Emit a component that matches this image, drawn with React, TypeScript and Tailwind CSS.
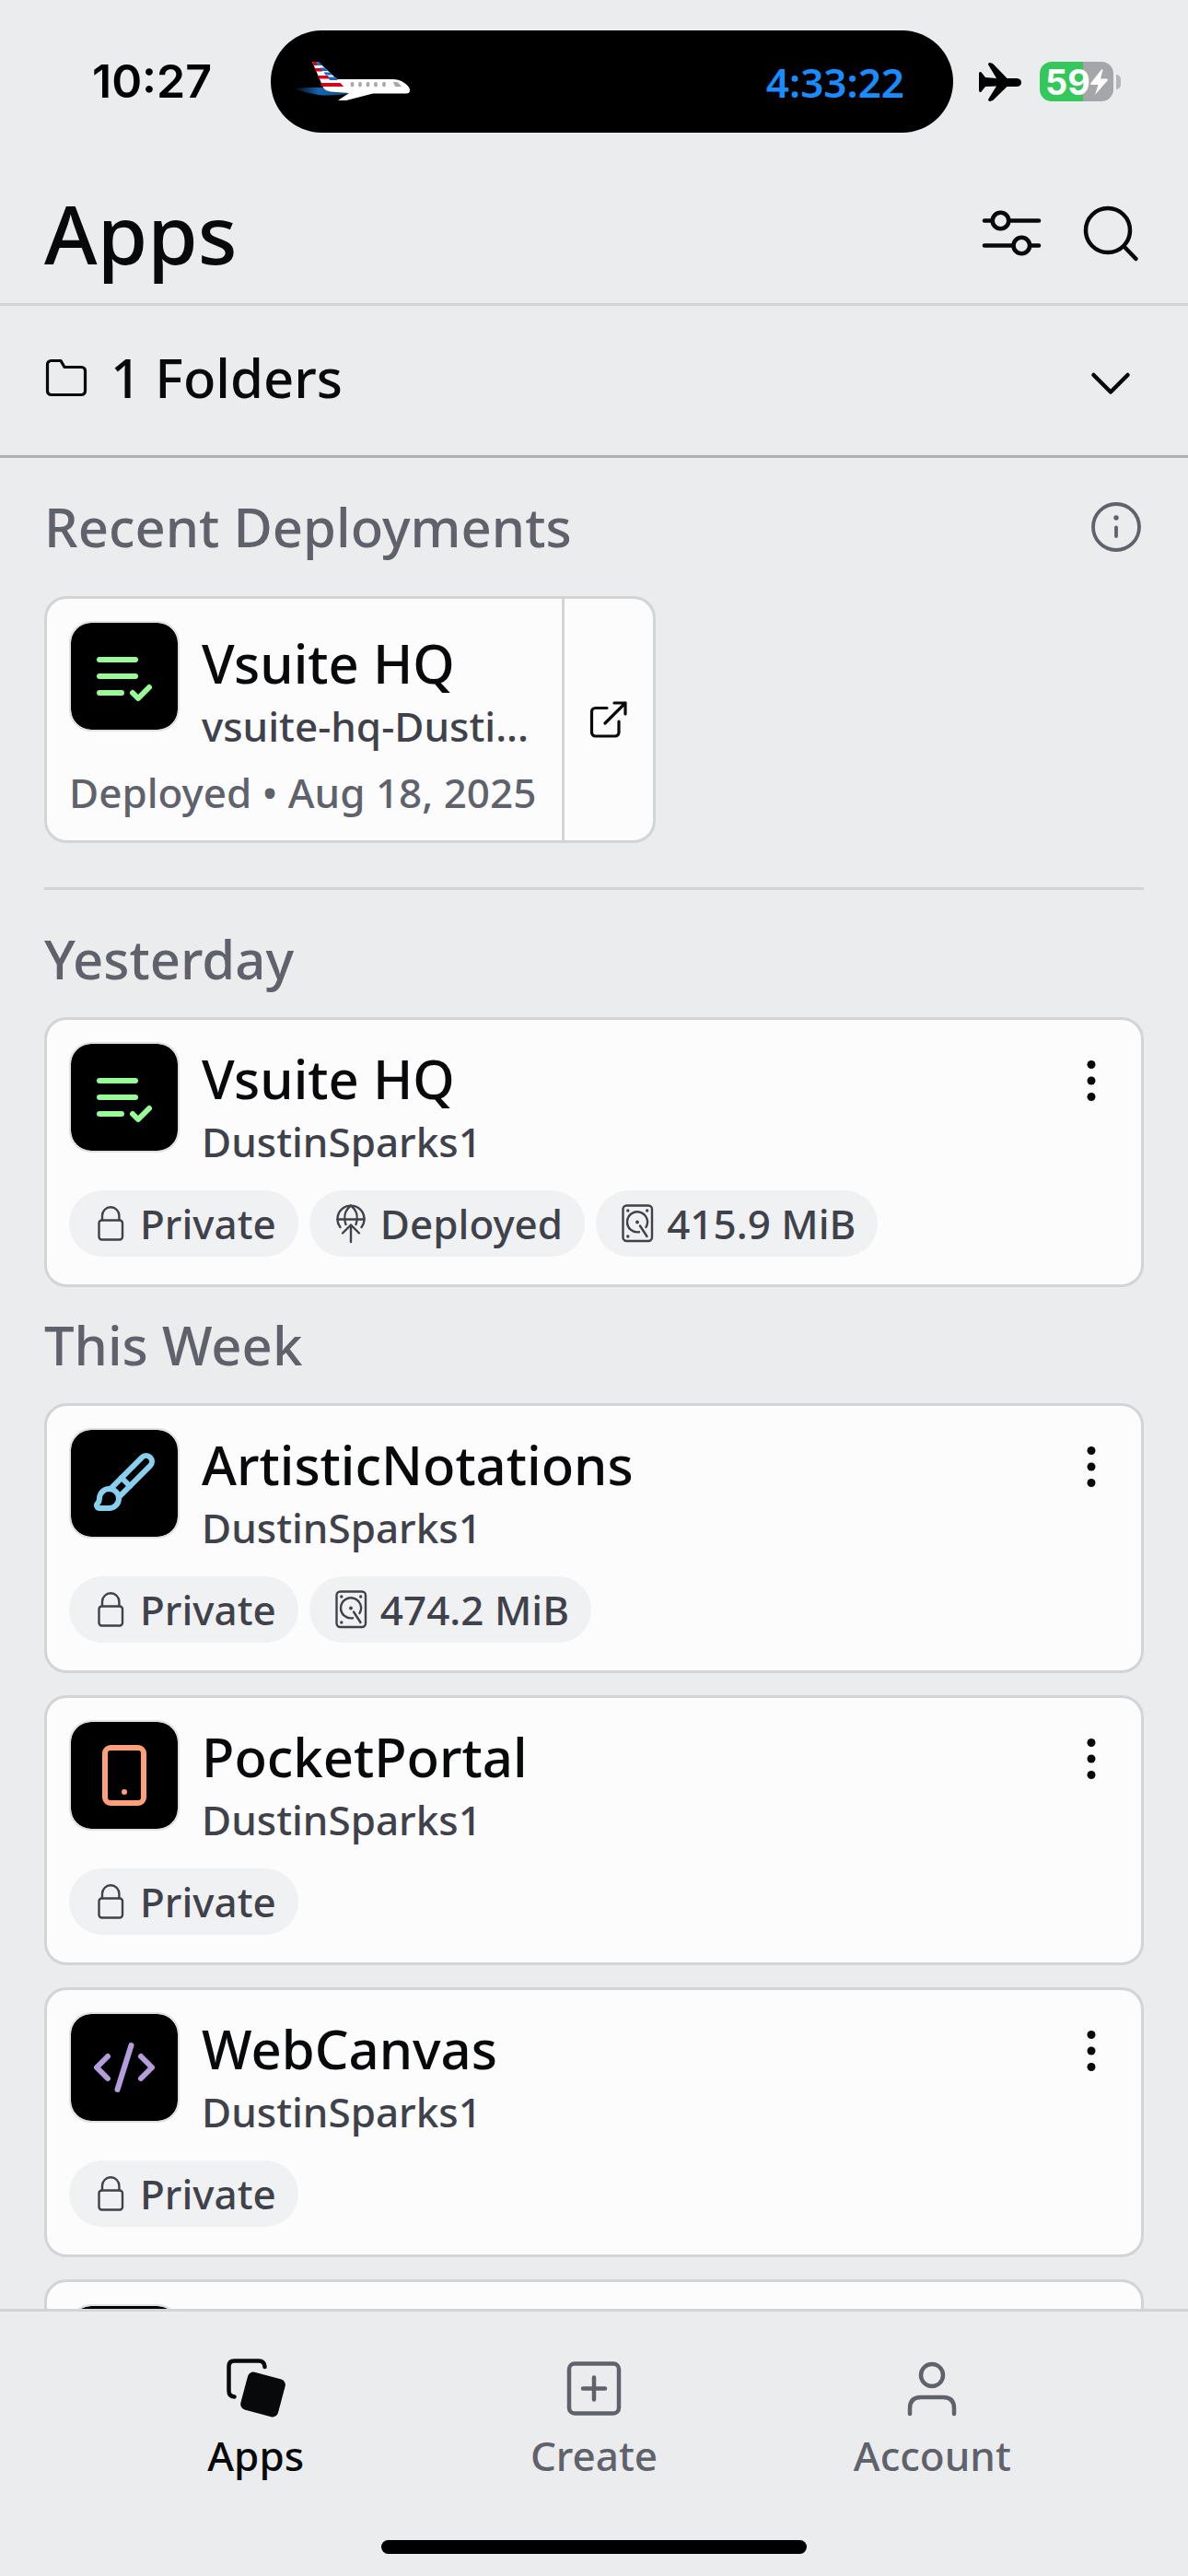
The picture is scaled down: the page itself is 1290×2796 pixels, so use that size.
import React from "react";
import { Brush, CodeXml, Smartphone } from "lucide-react";

type Tag = "private" | "deployed" | "storage";
type AppItem = { name: string; owner: string; icon: React.ReactNode; tags: { kind: Tag; label: string }[] };

/* ---------- icons ---------- */

function Stroke({ box, width, className, children }: { box: string; width: number; className: string; children: React.ReactNode }) {
  return (
    <svg viewBox={box} className={className} fill="none" stroke="currentColor" strokeWidth={width} strokeLinecap="round" strokeLinejoin="round" aria-hidden="true">
      {children}
    </svg>
  );
}

function ListCheckIcon() {
  return (
    <Stroke box="0 0 24 24" width={2} className="size-18 text-[#98fb98]">
      <path d="M16 6H3M16 12H3M11 18H3" />
      <path d="m15 18 2 2 4-4" />
    </Stroke>
  );
}

function FiltersIcon() {
  return (
    <Stroke box="0 0 72 72" width={4.6} className="size-18">
      <path d="M7 22.500h8.500M33.500 22.500H66M7 49.500h31M56.500 49.500H66" />
      <circle cx="24.500" cy="22.500" r="8.800" />
      <circle cx="47.300" cy="49.500" r="8.800" />
    </Stroke>
  );
}

function SearchIcon() {
  return (
    <Stroke box="0 0 72 72" width={4.5} className="size-18">
      <circle cx="33" cy="33" r="24" />
      <path d="M50.500 50.500 63.500 64" />
    </Stroke>
  );
}

function FolderIcon() {
  return (
    <Stroke box="0 0 48 48" width={3.2} className="size-12">
      <path d="M7.500 5.500H18l4 7h18.500a4 4 0 0 1 4 4v22a4 4 0 0 1-4 4h-33a4 4 0 0 1-4-4v-29a4 4 0 0 1 4-4Z" />
    </Stroke>
  );
}

function ChevronIcon() {
  return (
    <Stroke box="0 0 72 72" width={4.5} className="size-18">
      <path d="M17.500 33 36 51.500 54.500 33" />
    </Stroke>
  );
}

function InfoIcon() {
  return (
    <Stroke box="0 0 60 60" width={3.8} className="size-15">
      <circle cx="30" cy="30" r="25" />
      <path d="M30 30.500v9.500" />
      <circle cx="30" cy="20" r="2.700" fill="currentColor" stroke="none" />
    </Stroke>
  );
}

function ExternalIcon() {
  return (
    <Stroke box="0 0 48 48" width={3.2} className="size-12">
      <path d="M22 11.500H9.500a4 4 0 0 0-4 4V38a4 4 0 0 0 4 4H31a4 4 0 0 0 4-4V26" />
      <path d="M30 6h12v12M42 6 20 28" />
    </Stroke>
  );
}

function DotsIcon() {
  return (
    <svg viewBox="0 0 48 48" className="size-12" fill="currentColor" aria-hidden="true">
      <circle cx="24" cy="6.500" r="4.500" />
      <circle cx="24" cy="24" r="4.500" />
      <circle cx="24" cy="41.500" r="4.500" />
    </svg>
  );
}

function TagIcon({ kind }: { kind: Tag }) {
  return (
    <Stroke box="0 0 36 48" width={2.4} className="h-12 w-9">
      {kind === "private" && (
        <>
          <rect x="5.500" y="20.500" width="25.500" height="21" rx="3" />
          <path d="M9 20v-4.500a9.200 9.200 0 0 1 18.400 0V20" />
        </>
      )}
      {kind === "deployed" && (
        <>
          <path d="M6.500 28A14.500 14.500 0 1 1 29.500 28" />
          <path d="M3.500 19.500h29M12.500 25c-2.500-7-1.500-15 5.500-20.500 7 5.500 8 13.500 5.500 20.500" />
          <path d="M18 25.500V44M9 34.500l9-9 9 9" />
        </>
      )}
      {kind === "storage" && (
        <>
          <rect x="2.500" y="4.500" width="31.500" height="38.500" rx="4" />
          <path d="M27.500 28A11 11 0 1 0 20 33.200M21 26.500 28.500 38" />
          <g fill="currentColor" stroke="none">
            <circle cx="18" cy="22.500" r="1.900" />
            <circle cx="7.800" cy="10" r="1.700" />
            <circle cx="28.700" cy="10" r="1.700" />
            <circle cx="7.800" cy="38" r="1.700" />
          </g>
        </>
      )}
    </Stroke>
  );
}

function AppsTabIcon() {
  return (
    <Stroke box="0 0 72 72" width={4.5} className="size-18">
      <path d="M12.500 45.500Q6.500 45 6.500 39V12.500Q6.500 6.500 12.500 6.500H39Q45 6.500 45.500 13" />
      <rect x="22.500" y="22" width="42" height="42" rx="6" transform="rotate(15 43.500 43)" fill="currentColor" stroke="none" />
    </Stroke>
  );
}

function CreateTabIcon() {
  return (
    <Stroke box="0 0 72 72" width={4.5} className="size-18">
      <rect x="9" y="9.500" width="54" height="54" rx="6" />
      <path d="M36 24.500v24M24 36.500h24" />
    </Stroke>
  );
}

function AccountTabIcon() {
  return (
    <Stroke box="0 0 72 72" width={4.5} className="size-18">
      <circle cx="36" cy="22" r="12" />
      <path d="M12 64v-6q0-12 12-12h24q12 0 12 12v6" />
    </Stroke>
  );
}

function JetLiveryIcon() {
  return (
    <svg viewBox="318 64 130 46" className="h-[46px] w-[130px]" aria-hidden="true">
      <defs>
        <linearGradient id="trail" x1="0" x2="1" y1="0" y2="0">
          <stop offset="0" stopColor="#1565b0" stopOpacity="0" />
          <stop offset="0.450" stopColor="#1565b0" />
          <stop offset="1" stopColor="#1565b0" stopOpacity="0.700" />
        </linearGradient>
        <clipPath id="fin">
          <path d="M339 65h6.500L366 84l8 9h-24Z" />
        </clipPath>
      </defs>
      <path d="M318 94q16-1.500 34-1l28 6.500q-20 3-34 1.500-14-2-28-7Z" fill="url(#trail)" />
      <path d="M339 65h6.500L366 84h60q8 0 13 4 6 4 6 8 0 3.500-4 3.500h-36L376 107h-9l12-8-20-1.500q-6-1-8-4.500Z" fill="#fff" />
      <g clipPath="url(#fin)">
        <path d="M338 65h6l1 4h-7ZM340 72h8l2.500 3.500H340ZM342 80h14l2 3.500h-16ZM346 88h24l5 4h-29Z" fill="#d9001b" />
        <path d="M343.500 65H352v4h-7ZM347.500 71.500H360V75h-10.500ZM351.500 76.500H364V79.500h-10.500ZM356 81.500h14v3.500h-12Z" fill="#1766c8" />
      </g>
      <g fill="#aaa">
        <ellipse cx="382.500" cy="89.500" rx="2" ry="2.700" />
        <ellipse cx="391" cy="89.500" rx="2" ry="2.700" />
        <ellipse cx="399.500" cy="89.500" rx="2" ry="2.700" />
        <ellipse cx="408" cy="89.500" rx="2" ry="2.700" />
        <ellipse cx="417" cy="89.500" rx="2" ry="2.700" />
        <path d="M427 87h4q3 1.500 5 5h-7Z" />
      </g>
    </svg>
  );
}

function AirplaneModeIcon() {
  return (
    <svg viewBox="0 0 46 42" className="h-[42px] w-[46px]" fill="#000" aria-label="Airplane mode" role="img">
      <path d="M1.500 10Q2.500 10 3 11l4 5 12 1L10 2Q10 0 12 0l3 1 15.500 16H40q6 0 6 4.500T40 26h-9.500L15 41l-3 1q-2 0-2-2l9-14.500L7 26l-4 5q-.5 1-1.500 1T0 30.500v-19Q0 10 1.500 10Z" />
    </svg>
  );
}

function Battery() {
  return (
    <div className="flex items-center gap-[3px]">
      <div className="flex h-[43px] w-20 items-center justify-center rounded-[13px] bg-linear-to-r from-[#34c759] from-59% to-[#a5a6a9] to-59% text-white">
        <span className='font-["Inter"] text-[38px] leading-none font-bold'>59</span>
        <svg viewBox="0 0 19 28" className="h-7 w-[19px]" fill="currentColor" aria-hidden="true">
          <path d="M12.500 0 .5 15q-1 2 1 2h7L5 28 18.500 12.500q1-2-1-2h-6.500L13.500 1Z" />
        </svg>
      </div>
      <div className="h-4 w-[5px] rounded-r-full bg-[#b5b6b9]" />
    </div>
  );
}

/* ---------- parts ---------- */

function Tile({ children }: { children?: React.ReactNode }) {
  return (
    <div className="flex size-30 shrink-0 items-center justify-center rounded-3xl border-2 border-[#e0e1e3] bg-black bg-clip-padding">{children}</div>
  );
}

function SectionTitle({ children }: { children: React.ReactNode }) {
  return <h2 className="text-[58px] leading-18 text-[#5f626b]">{children}</h2>;
}

const cardFrame = "rounded-3xl border-3 border-[#d2d4d6] bg-[#fcfcfd]";

function AppCard({ app }: { app: AppItem }) {
  return (
    <article className={`${cardFrame} px-6 pt-6 pb-[30px]`}>
      <div className="flex items-start gap-6">
        <Tile>{app.icon}</Tile>
        <div className="flex min-w-0 flex-1 flex-col gap-0.5 pt-1">
          <h3 className="text-[58px] leading-18 whitespace-nowrap">{app.name}</h3>
          <p className="text-[44px] leading-15 whitespace-nowrap text-[#3f424a]">{app.owner}</p>
        </div>
        <button type="button" aria-label={`Options for ${app.name}`} className="mr-1.5 flex h-21 items-center">
          <DotsIcon />
        </button>
      </div>
      <ul className="mt-[23px] flex flex-wrap gap-3">
        {app.tags.map((tag) => (
          <li key={tag.kind} className="flex h-18 items-center gap-3.5 rounded-full bg-[#f0f1f3] pr-6 pl-[27px] text-[44px] leading-15 text-[#3f424a]">
            <TagIcon kind={tag.kind} />
            {tag.label}
          </li>
        ))}
      </ul>
    </article>
  );
}

const yesterday: AppItem[] = [
  {
    name: "Vsuite HQ",
    owner: "DustinSparks1",
    icon: <ListCheckIcon />,
    tags: [
      { kind: "private", label: "Private" },
      { kind: "deployed", label: "Deployed" },
      { kind: "storage", label: "415.9 MiB" },
    ],
  },
];

const thisWeek: AppItem[] = [
  {
    name: "ArtisticNotations",
    owner: "DustinSparks1",
    icon: <Brush className="size-18 text-[#89cff0]" />,
    tags: [
      { kind: "private", label: "Private" },
      { kind: "storage", label: "474.2 MiB" },
    ],
  },
  {
    name: "PocketPortal",
    owner: "DustinSparks1",
    icon: <Smartphone className="size-18 text-[#ffa07a]" />,
    tags: [{ kind: "private", label: "Private" }],
  },
  {
    name: "WebCanvas",
    owner: "DustinSparks1",
    icon: <CodeXml className="size-18 text-[#b39ddb]" />,
    tags: [{ kind: "private", label: "Private" }],
  },
];

const tabs = [
  { label: "Apps", icon: <AppsTabIcon />, active: true },
  { label: "Create", icon: <CreateTabIcon />, active: false },
  { label: "Account", icon: <AccountTabIcon />, active: false },
];

export default function App() {
  return (
    <div className='flex h-screen flex-col bg-[#ebecee] font-["Noto_Sans",sans-serif] font-medium text-[#07090b]'>
      <div className="flex h-[177px] shrink-0 items-start pt-[33px] pr-[73px]">
        <time className='flex h-[111px] w-[294px] items-center justify-center pl-9 font-["Inter"] text-[50px] font-semibold text-black'>10:27</time>
        <div className="flex h-[111px] flex-1 items-center justify-between rounded-full bg-black pr-[53px] pl-6">
          <JetLiveryIcon />
          <span className="text-[44px] leading-15 font-semibold text-[#1a8cff]">4:33:22</span>
        </div>
        <div className="flex h-[111px] items-center gap-5 pl-7">
          <AirplaneModeIcon />
          <Battery />
        </div>
      </div>

      <header className="flex shrink-0 items-center justify-between border-b-3 border-[#d2d4d6] px-12 py-5">
        <h1 className="text-[88px] leading-28">Apps</h1>
        <div className="flex gap-9">
          <button type="button" aria-label="Filter"><FiltersIcon /></button>
          <button type="button" aria-label="Search"><SearchIcon /></button>
        </div>
      </header>

      <button type="button" className="flex w-full shrink-0 items-center gap-6 border-b-3 border-[#aeb0b3] px-12 pt-[42px] pb-12 text-left">
        <FolderIcon />
        <span className="flex-1 text-[58px] leading-18">1 Folders</span>
        <ChevronIcon />
      </button>

      <main className="min-h-0 flex-1 overflow-y-auto px-12 [scrollbar-width:none]">
        <section className="border-b-3 border-[#d2d4d6] pt-[39px] pb-12">
          <div className="flex items-center justify-between">
            <SectionTitle>Recent Deployments</SectionTitle>
            <button type="button" aria-label="About recent deployments" className="text-[#5f626b]"><InfoIcon /></button>
          </div>
          <article className={`${cardFrame} mt-[39px] flex w-[664px] max-w-full`}>
            <div className="min-w-0 flex-1 px-6 pt-6 pb-[22px]">
              <div className="flex gap-6">
                <Tile><ListCheckIcon /></Tile>
                <div className="flex min-w-0 flex-1 flex-col gap-0.5 pt-2.5">
                  <h3 className="text-[58px] leading-18 whitespace-nowrap">Vsuite HQ</h3>
                  <p className="text-[44px] leading-15 whitespace-nowrap text-[#3f424a]">vsuite-hq-Dusti...</p>
                </div>
              </div>
              <p className="mt-3 text-[44px] leading-15 whitespace-nowrap text-[#5f626b]">Deployed • Aug 18, 2025</p>
            </div>
            <a href="#deployment" aria-label="Open deployment" className="flex w-[99px] shrink-0 items-center justify-center border-l-3 border-[#d2d4d6]">
              <ExternalIcon />
            </a>
          </article>
        </section>

        <section className="flex flex-col gap-[27px] pt-[39px]">
          <SectionTitle>Yesterday</SectionTitle>
          <div className="flex flex-col gap-6">
            {yesterday.map((app) => <AppCard key={app.name} app={app} />)}
          </div>
        </section>

        <section className="flex flex-col gap-[27px] pt-[27px]">
          <SectionTitle>This Week</SectionTitle>
          <div className="flex flex-col gap-6">
            {thisWeek.map((app) => <AppCard key={app.name} app={app} />)}
            <article className={`${cardFrame} p-6`}><Tile /></article>
          </div>
        </section>
      </main>

      <nav className="shrink-0 border-t-3 border-[#d2d4d6] pt-[47px] pb-6">
        <ul className="grid grid-cols-3 px-[94px]">
          {tabs.map((tab) => (
            <li key={tab.label}>
              <a
                href={`#${tab.label.toLowerCase()}`}
                aria-current={tab.active ? "page" : undefined}
                className={`flex flex-col items-center gap-[7px] text-[44px] leading-15 ${tab.active ? "text-[#07090b]" : "text-[#5f626b]"}`}
              >
                {tab.icon}
                {tab.label}
              </a>
            </li>
          ))}
        </ul>
        <div className="mx-auto mt-[62px] h-[15px] w-[462px] rounded-full bg-black" />
      </nav>
    </div>
  );
}
